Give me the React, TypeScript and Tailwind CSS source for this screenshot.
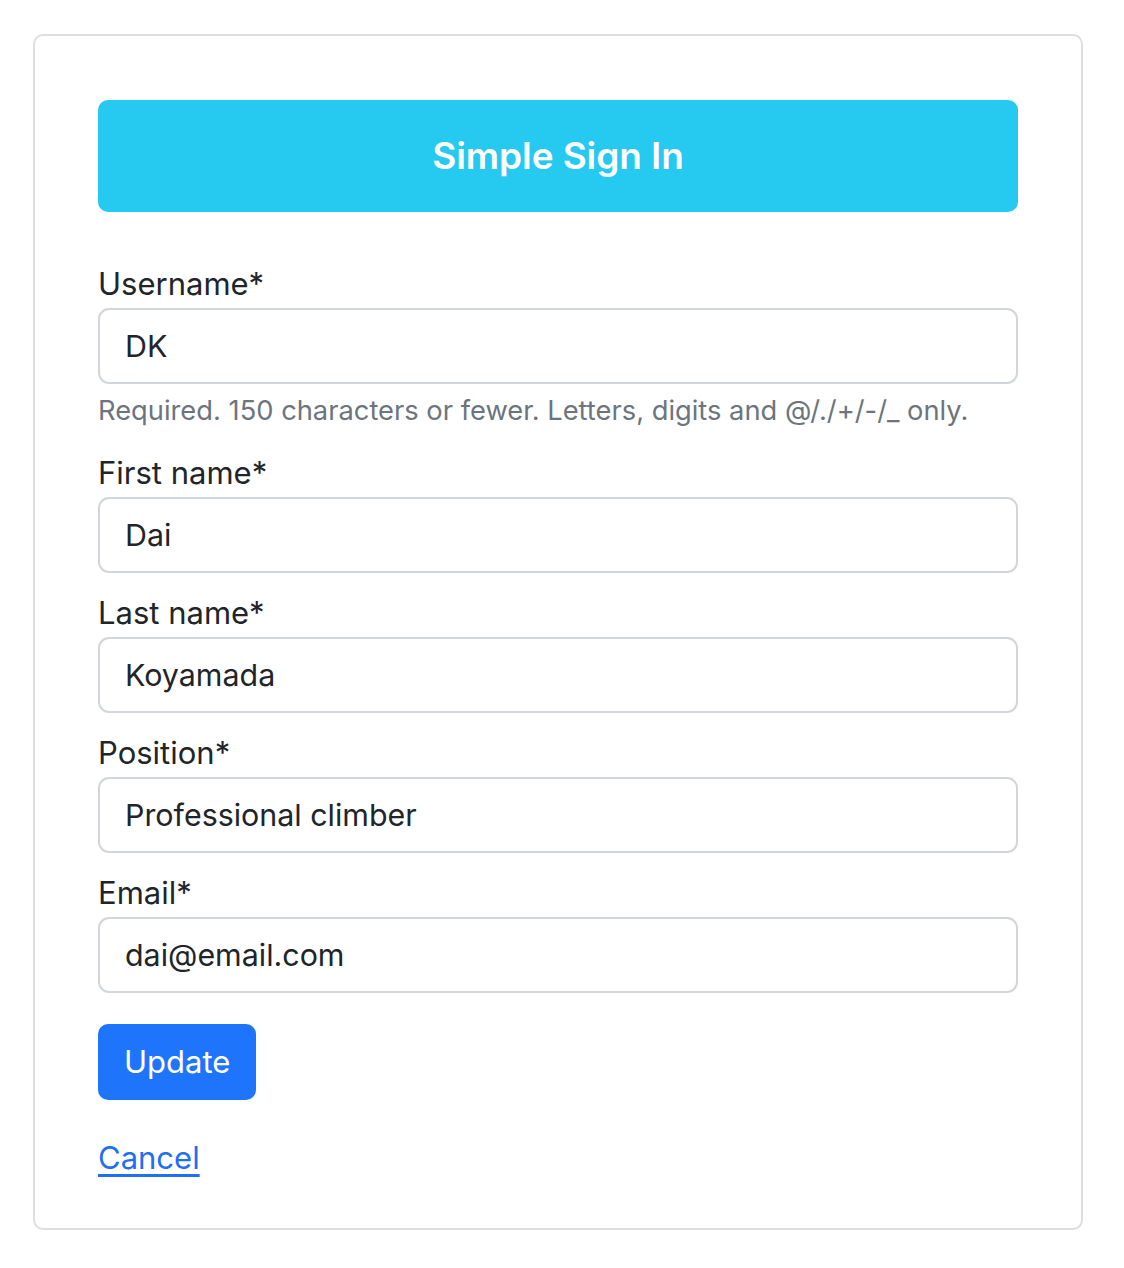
import { useState } from "react";

const fields = [
  {
    id: "username",
    label: "Username*",
    value: "DK",
    help: "Required. 150 characters or fewer. Letters, digits and @/./+/-/_ only.",
  },
  { id: "first_name", label: "First name*", value: "Dai" },
  { id: "last_name", label: "Last name*", value: "Koyamada" },
  { id: "position", label: "Position*", value: "Professional climber" },
  { id: "email", label: "Email*", value: "dai@email.com" },
];

export default function App() {
  const [values, setValues] = useState<Record<string, string>>(
    Object.fromEntries(fields.map((f) => [f.id, f.value]))
  );

  return (
    <div
      className="min-h-screen bg-white pt-[34px] pl-[33px] pr-[41px] text-[#212529]"
      style={{ fontFamily: "Inter, 'Noto Sans', sans-serif" }}
    >
      <div className="rounded-[10px] border-2 border-[#dedede] px-[63px] pt-[64px] pb-[46px]">
        {/* Header */}
        <div className="flex h-[112px] items-center justify-center rounded-[10px] bg-[#26c9ef]">
          <h1 className="text-[37px] font-semibold tracking-[-0.1px] text-white">
            Simple Sign In
          </h1>
        </div>

        {/* Form */}
        <form
          className="mt-[48px] flex flex-col gap-[16px]"
          onSubmit={(e) => e.preventDefault()}
        >
          {fields.map((field) => (
            <div key={field.id}>
              <label
                htmlFor={field.id}
                className="block text-[31px] leading-[48px]"
              >
                {field.label}
              </label>
              <input
                id={field.id}
                type="text"
                value={values[field.id]}
                onChange={(e) =>
                  setValues({ ...values, [field.id]: e.target.value })
                }
                className="block h-[76px] w-full rounded-[11px] border-2 border-[#d2d6da] bg-white px-[25px] text-[30.4px] text-[#212529] outline-none focus:border-[#86b7fe]"
              />
              {field.help && (
                <div className="mt-[5px] text-[27.3px] leading-[44px] text-[#6c757d]">
                  {field.help}
                </div>
              )}
            </div>
          ))}

          <div className="pt-[15px]">
            <button
              type="submit"
              className="h-[76px] rounded-[10px] bg-[#1f74fc] px-[26px] text-[31px] text-white"
            >
              Update
            </button>
          </div>
        </form>

        <div className="mt-[34px]">
          <a
            href="#"
            className="text-[31px] leading-[48px] text-[#1f6ff4] underline underline-offset-[5px]"
          >
            Cancel
          </a>
        </div>
      </div>
    </div>
  );
}
